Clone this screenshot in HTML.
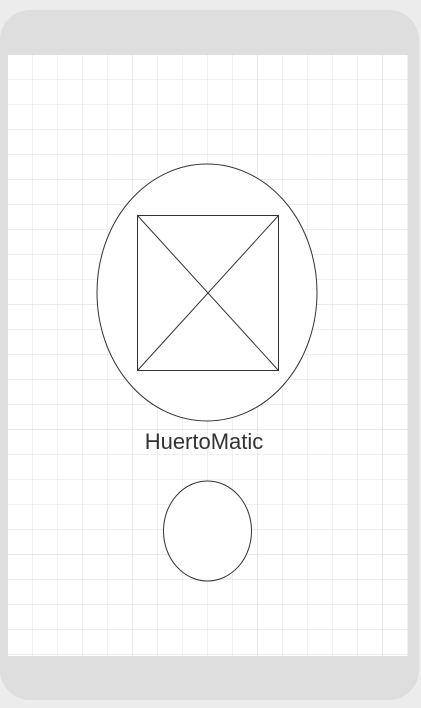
<!DOCTYPE html>
<html><head><style>
html,body{margin:0;padding:0;width:421px;height:708px;background:#ececec;overflow:hidden}
svg{display:block}
</style></head><body>
<svg width="421" height="708" xmlns="http://www.w3.org/2000/svg">
<defs>
<pattern id="g" x="8" y="55" width="25" height="25" patternUnits="userSpaceOnUse">
<path d="M25 0V25M0 25H25" stroke="#e2e2e2" stroke-width="1" fill="none"/>
</pattern>
<pattern id="G" x="8" y="55" width="125" height="125" patternUnits="userSpaceOnUse">
<path d="M125 0V125M0 125H125" stroke="#d6d6d6" stroke-width="1" fill="none"/>
</pattern>
</defs>
<rect x="0" y="10" width="419" height="690" rx="30" fill="#dedede"/>
<rect x="8" y="55" width="400" height="601" fill="#fff"/>
<rect x="8" y="55" width="400" height="601" fill="url(#g)"/>
<rect x="8" y="55" width="400" height="601" fill="url(#G)"/>
<ellipse cx="207" cy="292.5" rx="110" ry="128.5" fill="#fff" stroke="#333" stroke-width="1"/>
<rect x="137.5" y="215.5" width="141" height="155" fill="none" stroke="#333"/>
<path d="M137.5 215.5L278.5 370.5M278.5 215.5L137.5 370.5" stroke="#333"/>
<text x="204" y="449" text-anchor="middle" font-family="Liberation Sans, sans-serif" font-size="22" fill="#333">HuertoMatic</text>
<ellipse cx="207.5" cy="531" rx="44" ry="50" fill="#fff" stroke="#333"/>
</svg>
</body></html>
